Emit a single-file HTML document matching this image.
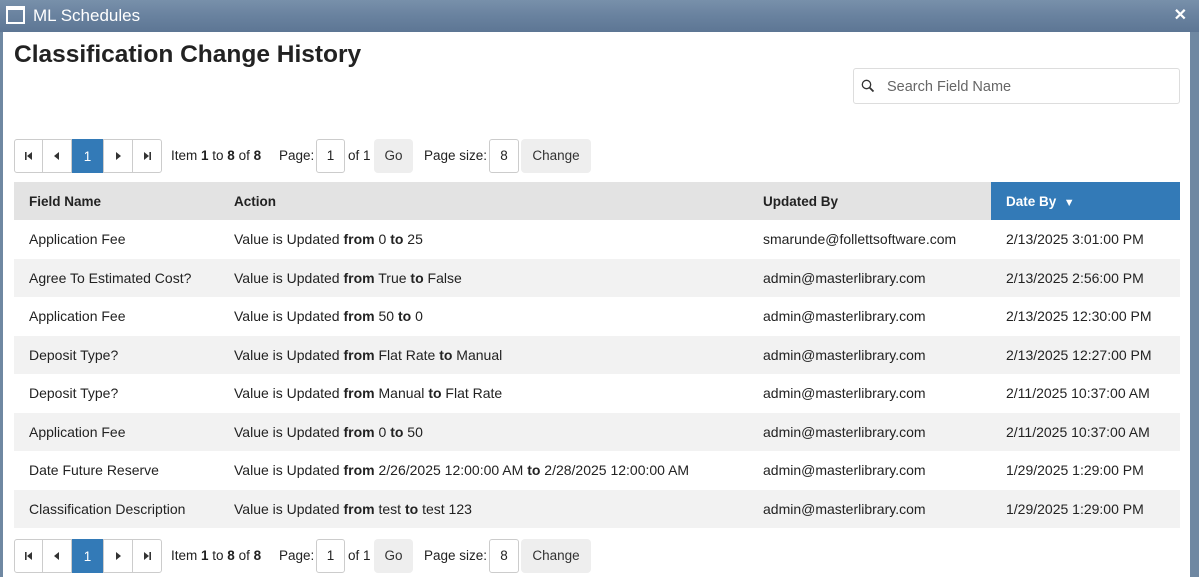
<!DOCTYPE html>
<html><head><style>
*{box-sizing:border-box;margin:0;padding:0}
body{width:1199px;height:577px;overflow:hidden;background:#6f88a2;font-family:"Liberation Sans",sans-serif;color:#222;position:relative}
.tb{position:absolute;left:0;top:0;width:1199px;height:32px;background:linear-gradient(#7890aa,#6a83a0 45%,#5d7694);color:#fff;font-size:17px}
.tb .ic{position:absolute;left:6px;top:6px;width:19px;height:18px;border:2px solid #fff;border-top-width:4px}
.tb .t{position:absolute;left:33px;top:6px}
.tb .x{position:absolute;right:12px;top:5px;font-weight:bold;font-size:16px}
.ct{position:absolute;left:3px;top:32px;width:1187px;height:545px;background:#fff}
h1{position:absolute;left:11px;top:9px;font-size:24.5px;font-weight:bold;color:#222}
.srch{position:absolute;left:850px;top:36px;width:327px;height:36px;border:1px solid #ddd;border-radius:3px}
.srch span{position:absolute;left:33px;top:10px;font-size:14.5px;color:#666}
.pg{position:absolute;left:11px;height:34px;font-size:13.5px}
.pgb{position:absolute;left:0;top:0;width:148px;height:34px;border:1px solid #ccc;border-radius:3px;display:flex}
.pgb div{width:29px;height:32px;border-right:1px solid #ccc;display:flex;align-items:center;justify-content:center;color:#333}
.pgb div:last-child{border:none}
.pgb .a{background:#337ab7;color:#fff;font-size:13.5px;width:33px;margin-top:-1px;height:34px}
.pg .s{position:absolute;top:9px;white-space:nowrap}
.pg .in{position:absolute;top:0;height:34px;border:1px solid #ccc;border-radius:3px;text-align:center;line-height:32px}
.pg .bt{position:absolute;top:0;height:34px;background:#eee;border-radius:4px;text-align:center;line-height:34px;color:#333}
table{position:absolute;left:11px;top:150px;width:1166px;border-collapse:collapse;font-size:14px}
th{height:38px;background:#e3e3e3;text-align:left;font-weight:bold;padding-left:15px;font-size:13.5px}
th.d{background:#337ab7;color:#fff}
td{height:38.5px;padding-left:15px}
tr:nth-child(odd) td{background:#f2f2f2}
</style></head><body>
<div class="tb"><div class="ic"></div><div class="t">ML Schedules</div><div class="x">✕</div></div>
<div class="ct">
<h1>Classification Change History</h1>
<div class="srch"><svg style="position:absolute;left:7px;top:10px" width="14" height="14" viewBox="0 0 14 14"><circle cx="5.5" cy="5.5" r="4.2" fill="none" stroke="#333" stroke-width="1.3"/><path d="M8.6 8.6L12.5 12.5" stroke="#333" stroke-width="1.8"/></svg><span>Search Field Name</span></div>

<div class="pg" style="top:107px">
<div class="pgb"><div><svg width="8" height="8"><rect x="0" y="0" width="1.6" height="8" fill="#333"/><path d="M7 0V8L2 4Z" fill="#333"/></svg></div><div><svg width="6" height="8"><path d="M5 0V8L0 4Z" fill="#333"/></svg></div><div class="a">1</div><div><svg width="6" height="8"><path d="M1 0V8L6 4Z" fill="#333"/></svg></div><div><svg width="8" height="8"><path d="M1 0V8L6 4Z" fill="#333"/><rect x="6.4" y="0" width="1.6" height="8" fill="#333"/></svg></div></div>
<span class="s" style="left:157px">Item <b>1</b> to <b>8</b> of <b>8</b></span>
<span class="s" style="left:265px">Page:</span>
<div class="in" style="left:302px;width:29px">1</div>
<span class="s" style="left:334px">of 1</span>
<div class="bt" style="left:360px;width:39px">Go</div>
<span class="s" style="left:410px">Page size:</span>
<div class="in" style="left:475px;width:30px">8</div>
<div class="bt" style="left:507px;width:70px">Change</div>
</div>

<table>
<tr><th style="width:205px">Field Name</th><th style="width:529px">Action</th><th style="width:243px">Updated By</th><th class="d">Date By &nbsp;<span style="font-size:11px">▼</span></th></tr>
<tr><td>Application Fee</td><td>Value is Updated <b>from</b> 0 <b>to</b> 25</td><td>smarunde@follettsoftware.com</td><td>2/13/2025 3:01:00 PM</td></tr>
<tr><td>Agree To Estimated Cost?</td><td>Value is Updated <b>from</b> True <b>to</b> False</td><td>admin@masterlibrary.com</td><td>2/13/2025 2:56:00 PM</td></tr>
<tr><td>Application Fee</td><td>Value is Updated <b>from</b> 50 <b>to</b> 0</td><td>admin@masterlibrary.com</td><td>2/13/2025 12:30:00 PM</td></tr>
<tr><td>Deposit Type?</td><td>Value is Updated <b>from</b> Flat Rate <b>to</b> Manual</td><td>admin@masterlibrary.com</td><td>2/13/2025 12:27:00 PM</td></tr>
<tr><td>Deposit Type?</td><td>Value is Updated <b>from</b> Manual <b>to</b> Flat Rate</td><td>admin@masterlibrary.com</td><td>2/11/2025 10:37:00 AM</td></tr>
<tr><td>Application Fee</td><td>Value is Updated <b>from</b> 0 <b>to</b> 50</td><td>admin@masterlibrary.com</td><td>2/11/2025 10:37:00 AM</td></tr>
<tr><td>Date Future Reserve</td><td>Value is Updated <b>from</b> 2/26/2025 12:00:00 AM <b>to</b> 2/28/2025 12:00:00 AM</td><td>admin@masterlibrary.com</td><td>1/29/2025 1:29:00 PM</td></tr>
<tr><td>Classification Description</td><td>Value is Updated <b>from</b> test <b>to</b> test 123</td><td>admin@masterlibrary.com</td><td>1/29/2025 1:29:00 PM</td></tr>
</table>

<div class="pg" style="top:507px">
<div class="pgb"><div><svg width="8" height="8"><rect x="0" y="0" width="1.6" height="8" fill="#333"/><path d="M7 0V8L2 4Z" fill="#333"/></svg></div><div><svg width="6" height="8"><path d="M5 0V8L0 4Z" fill="#333"/></svg></div><div class="a">1</div><div><svg width="6" height="8"><path d="M1 0V8L6 4Z" fill="#333"/></svg></div><div><svg width="8" height="8"><path d="M1 0V8L6 4Z" fill="#333"/><rect x="6.4" y="0" width="1.6" height="8" fill="#333"/></svg></div></div>
<span class="s" style="left:157px">Item <b>1</b> to <b>8</b> of <b>8</b></span>
<span class="s" style="left:265px">Page:</span>
<div class="in" style="left:302px;width:29px">1</div>
<span class="s" style="left:334px">of 1</span>
<div class="bt" style="left:360px;width:39px">Go</div>
<span class="s" style="left:410px">Page size:</span>
<div class="in" style="left:475px;width:30px">8</div>
<div class="bt" style="left:507px;width:70px">Change</div>
</div>
</div>
</body></html>
